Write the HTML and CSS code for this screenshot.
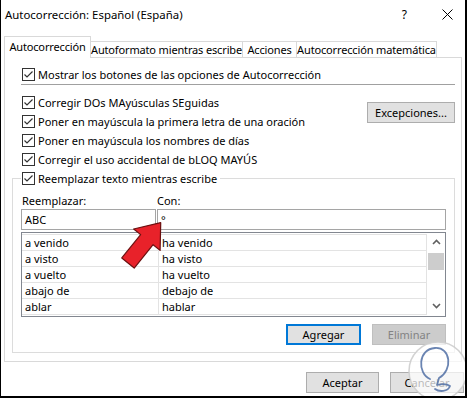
FILE: index.html
```html
<!DOCTYPE html>
<html lang="es">
<head>
<meta charset="utf-8">
<title>Autocorrección: Español (España)</title>
<link rel="stylesheet" href="styles.css">
</head>
<body>
<div class="window">
  <div class="titlebar">
    <span class="title">Autocorrección: Español (España)</span>
    <span class="help">?</span>
    <svg class="close" width="11" height="11" viewBox="0 0 11 11"><path d="M0.5 0.5 L10.5 10.5 M10.5 0.5 L0.5 10.5" stroke="#000" stroke-width="1" fill="none"/></svg>
  </div>

  <div class="tabs">
    <div class="tab active t1">Autocorrección</div>
    <div class="tab t2">Autoformato mientras escribe</div>
    <div class="tab t3">Acciones</div>
    <div class="tab t4">Autocorrección matemática</div>
  </div>

  <div class="panel">
    <label class="chk first"><svg class="box" viewBox="0 0 13 13"><rect x="0.5" y="0.5" width="12" height="12" fill="#fff" stroke="#333"/><path d="M2.5 6.5 L5 9 L10.5 3.5" stroke="#333" stroke-width="1.2" fill="none"/></svg>Mostrar los botones de las opciones de Autocorrección</label>
    <div class="sep"></div>

    <div class="opts">
      <div class="opt-list">
        <label class="chk"><svg class="box" viewBox="0 0 13 13"><rect x="0.5" y="0.5" width="12" height="12" fill="#fff" stroke="#333"/><path d="M2.5 6.5 L5 9 L10.5 3.5" stroke="#333" stroke-width="1.2" fill="none"/></svg>Corregir DOs MAyúsculas SEguidas</label>
        <label class="chk"><svg class="box" viewBox="0 0 13 13"><rect x="0.5" y="0.5" width="12" height="12" fill="#fff" stroke="#333"/><path d="M2.5 6.5 L5 9 L10.5 3.5" stroke="#333" stroke-width="1.2" fill="none"/></svg>Poner en mayúscula la primera letra de una oración</label>
        <label class="chk"><svg class="box" viewBox="0 0 13 13"><rect x="0.5" y="0.5" width="12" height="12" fill="#fff" stroke="#333"/><path d="M2.5 6.5 L5 9 L10.5 3.5" stroke="#333" stroke-width="1.2" fill="none"/></svg>Poner en mayúscula los nombres de días</label>
        <label class="chk"><svg class="box" viewBox="0 0 13 13"><rect x="0.5" y="0.5" width="12" height="12" fill="#fff" stroke="#333"/><path d="M2.5 6.5 L5 9 L10.5 3.5" stroke="#333" stroke-width="1.2" fill="none"/></svg>Corregir el uso accidental de bLOQ MAYÚS</label>
      </div>
      <button class="btn exc">Excepciones...</button>
    </div>

    <fieldset class="group">
      <legend class="legend"><label class="chk"><svg class="box" viewBox="0 0 13 13"><rect x="0.5" y="0.5" width="12" height="12" fill="#fff" stroke="#333"/><path d="M2.5 6.5 L5 9 L10.5 3.5" stroke="#333" stroke-width="1.2" fill="none"/></svg>Reemplazar texto mientras escribe</label></legend>

      <div class="labels">
        <span class="lbl-rep">Reemplazar:</span>
        <span class="lbl-con">Con:</span>
      </div>
      <div class="inputs">
        <div class="field f-rep">ABC</div>
        <div class="field f-con">°</div>
      </div>

      <div class="list">
        <div class="rows">
          <div class="row"><span class="c1">a venido</span><span class="c2">ha venido</span></div>
          <div class="row"><span class="c1">a visto</span><span class="c2">ha visto</span></div>
          <div class="row"><span class="c1">a vuelto</span><span class="c2">ha vuelto</span></div>
          <div class="row"><span class="c1">abajo de</span><span class="c2">debajo de</span></div>
          <div class="row"><span class="c1">ablar</span><span class="c2">hablar</span></div>
        </div>
        <div class="scroll">
          <div class="sarrow"><svg width="9" height="6" viewBox="0 0 9 6"><path d="M1 5 L4.5 1.5 L8 5" stroke="#606060" stroke-width="1.6" fill="none"/></svg></div>
          <div class="thumb"></div>
          <div class="sarrow down"><svg width="9" height="6" viewBox="0 0 9 6"><path d="M1 1 L4.5 4.5 L8 1" stroke="#606060" stroke-width="1.6" fill="none"/></svg></div>
        </div>
      </div>

      <div class="actions">
        <button class="btn primary">Agregar</button>
        <button class="btn disabled">Eliminar</button>
      </div>
    </fieldset>
  </div>

  <div class="footer">
    <button class="btn ok">Aceptar</button>
    <button class="btn cancel">Cancelar</button>
  </div>

  <svg class="arrow" width="60" height="65" viewBox="0 0 60 65">
    <g transform="translate(18 53) rotate(-51)">
      <polygon points="0,-8 30,-8 30,-17 52,0 30,17 30,8 0,8" fill="#e8222a" stroke="#6b1010" stroke-width="1.2" stroke-linejoin="round"/>
    </g>
  </svg>

  <svg class="watermark" width="60" height="60" viewBox="0 0 60 60">
    <circle cx="30" cy="31" r="29" fill="rgba(255,255,255,0.72)" stroke="rgba(205,205,205,0.9)" stroke-width="1.5"/>
    <path d="M22 39 C9 33 10 9 27 8 C43 7 45 30 31 38 L29 45 C33 44 38 43 42 46 C40 52 31 52 27 49" fill="none" stroke="rgba(80,110,165,0.85)" stroke-width="1.8" stroke-linejoin="round" stroke-linecap="round"/>
  </svg>
</div>
</body>
</html>
```

FILE: styles.css
```css
* {
  box-sizing: border-box;
}

html,
body {
  margin: 0;
  padding: 0;
}

body {
  width: 467px;
  height: 398px;
  overflow: hidden;
  background: #fff;
  font-family: "Noto Sans", "Segoe UI", sans-serif;
  font-size: 11px;
  color: #000;
}

.window {
  position: relative;
  width: 467px;
  height: 398px;
  border-left: 1px solid #000;
  border-right: 2px solid #000;
  border-bottom: 2px solid #000;
  background: #fff;
  overflow: hidden;
  display: flex;
  flex-direction: column;
}

/* title bar */
.titlebar {
  height: 28px;
  display: flex;
  align-items: center;
  padding-left: 4px;
  flex: none;
}

.title {
  flex: 1;
  white-space: nowrap;
  font-size: 11.4px;
}

.help {
  font-size: 12px;
  margin-right: 35px;
}

.close {
  margin-right: 12px;
  display: block;
}

/* tabs */
.tabs {
  display: flex;
  align-items: flex-end;
  height: 21px;
  margin: 8px 0 0 3px;
  position: relative;
  z-index: 1;
  flex: none;
}

.tab {
  height: 16px;
  border-top: 1px solid #d9d9d9;
  border-right: 1px solid #d9d9d9;
  background: #fff;
  text-align: center;
  line-height: 15px;
  white-space: nowrap;
  letter-spacing: -0.15px;
}

.tab.active {
  height: 22px;
  margin-bottom: -1px;
  border-left: 1px solid #d9d9d9;
  line-height: 19px;
}

.t1 { width: 87px; }
.t2 { width: 152px; }
.t3 { width: 54px; }
.t4 { width: 140px; }

/* panel */
.panel {
  margin-left: 3px;
  width: 458px;
  height: 305px;
  border: 1px solid #d9d9d9;
  background: #fff;
  flex: none;
}

.chk {
  display: flex;
  align-items: center;
  height: 19px;
  white-space: nowrap;
}

.box {
  width: 13px;
  height: 13px;
  margin-right: 3px;
  flex: none;
  display: block;
}

.chk.first {
  margin: 7px 0 0 17px;
}

.sep {
  height: 1px;
  background: #a0a0a0;
  margin: 0 6px 0 16px;
}

.opts {
  display: flex;
  justify-content: space-between;
  align-items: flex-start;
  margin-top: 8px;
}

.opt-list {
  padding-left: 17px;
}

.btn {
  font: inherit;
  color: #000;
  height: 21px;
  padding: 0;
  background: #e1e1e1;
  border: 1px solid #adadad;
  border-radius: 0;
  line-height: 17px;
}

.exc {
  width: 88px;
  margin: 9px 6px 0 0;
}

/* group box */
.group {
  margin: 0 6px 0 7px;
  padding: 0 8px 7px 8px;
  border: 1px solid #dcdcdc;
  min-width: 0;
}

.legend {
  padding: 0 3px 0 1px;
  margin: 0;
}

.labels {
  display: flex;
  margin-top: 5px;
  height: 16px;
  line-height: 16px;
}

.lbl-rep {
  width: 136px;
  padding-left: 1px;
}

.inputs {
  display: flex;
  gap: 1px;
}

.field {
  height: 21px;
  border: 1px solid #a5a5a5;
  padding-left: 3px;
  line-height: 19px;
  background: #fff;
}

.f-rep {
  width: 135px;
}

.f-con {
  flex: 1;
}

.list {
  margin-top: 2px;
  height: 85px;
  border: 1px solid #828790;
  padding: 1px 0;
  display: flex;
}

.rows {
  flex: 1;
  border-top: 1px solid #e3e3e3;
  border-right: 1px solid #e3e3e3;
}

.row {
  display: flex;
  height: 16px;
  border-bottom: 1px solid #e3e3e3;
  line-height: 15px;
  white-space: nowrap;
}

.c1 {
  width: 137px;
  padding-left: 3px;
  border-right: 1px solid #e3e3e3;
}

.c2 {
  padding-left: 3px;
}

.scroll {
  width: 18px;
  display: flex;
  flex-direction: column;
}

.sarrow {
  height: 16px;
  display: flex;
  align-items: center;
  justify-content: center;
}

.sarrow.down {
  margin-top: auto;
  height: 15px;
  margin-bottom: 2px;
}

.thumb {
  height: 17px;
  margin: 3px 1px 0 1px;
  background: #cdcdcd;
}

.actions {
  display: flex;
  justify-content: flex-end;
  gap: 11px;
  margin-top: 7px;
}

.primary {
  width: 75px;
  border: 2px solid #0078d7;
  line-height: 15px;
}

.disabled {
  width: 74px;
  background: #cccccc;
  border-color: #bfbfbf;
  color: #838383;
}

/* footer */
.footer {
  display: flex;
  justify-content: flex-end;
  gap: 11px;
  margin: 10px 1px 0 0;
  flex: none;
}

.ok {
  width: 73px;
}

.cancel {
  width: 74px;
}

/* overlays */
.arrow {
  position: absolute;
  left: 109px;
  top: 210px;
}

.watermark {
  position: absolute;
  left: 407px;
  top: 340px;
}
```
